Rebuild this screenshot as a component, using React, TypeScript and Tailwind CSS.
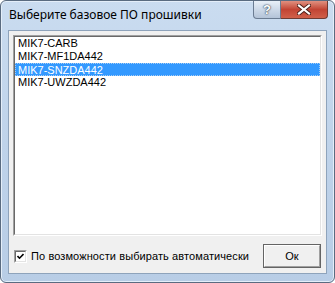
import React from "react";

const items = ["MIK7-CARB", "MIK7-MF1DA442", "MIK7-SNZDA442", "MIK7-UWZDA442"];

export default function App() {
  const selected = 2;

  return (
    <div className="w-[335px] h-[283px] bg-white">
      <div className="w-[335px] h-[283px] flex flex-col rounded-[6px] border border-[#5a6b80] bg-gradient-to-b from-[#cadcf0] via-[#bfd3ea] to-[#b8cde6] shadow-[inset_0_0_0_1px_#e4eef9]">
        {/* Title bar */}
        <div className="h-[29px] flex items-start">
          <span
            className="flex-1 pl-[8px] pt-[6px] text-[12px] leading-[16px] text-black"
            style={{ fontFamily: '"Noto Sans", "Open Sans", sans-serif' }}
          >
            Выберите базовое ПО прошивки
          </span>
          <div className="flex mr-[6px]">
            <div className="w-[28px] h-[18px] flex items-center justify-center rounded-bl-[4px] border border-t-0 border-[#6b7c92] bg-gradient-to-b from-[#e9f0f8] via-[#cdd9e8] to-[#b4c4d8]">
              <span
                className="text-[13px] font-bold leading-none text-white [text-shadow:0_0_1px_#2c3a4c,0_0_2px_#2c3a4c]"
                style={{ fontFamily: '"Liberation Sans", sans-serif' }}
              >
                ?
              </span>
            </div>
            <div className="w-[47px] h-[18px] flex items-center justify-center rounded-br-[4px] border border-t-0 border-l-0 border-[#6f3b33] bg-gradient-to-b from-[#e09080] via-[#c24434] to-[#d0604a]">
              <svg width="14" height="11" viewBox="0 0 14 11">
                <path d="M2 1.5 L12 9.5 M12 1.5 L2 9.5" stroke="#4a1d16" strokeWidth="4" strokeLinecap="square" />
                <path d="M2 1.5 L12 9.5 M12 1.5 L2 9.5" stroke="#ffffff" strokeWidth="2.2" strokeLinecap="square" />
              </svg>
            </div>
          </div>
        </div>

        {/* Client area */}
        <div
          className="ml-[7px] w-[319px] h-[244px] flex flex-col bg-[#f0f0f0] border border-[#8ea3bb] px-[4px] pt-[4px] pb-[5px]"
          style={{ fontFamily: '"Liberation Sans", Arial, sans-serif' }}
        >
          {/* List box */}
          <div className="h-[201px] border border-t-[#a0a0a0] border-l-[#a0a0a0] border-r-white border-b-white">
            <div className="h-full bg-white border border-t-[#696969] border-l-[#696969] border-r-[#e3e3e3] border-b-[#e3e3e3]">
              {items.map((item, i) => (
                <div
                  key={item}
                  className={
                    i === selected
                      ? "h-[13px] pl-[2px] text-[11px] leading-[12px] bg-[#3399ff] text-white border border-dotted border-[#a8cdf3]"
                      : "h-[13px] pl-[3px] text-[11px] leading-[13px] text-black"
                  }
                >
                  {item}
                </div>
              ))}
            </div>
          </div>

          {/* Bottom row */}
          <div className="mt-[8px] h-[24px] flex items-center">
            <div className="ml-[1px] w-[13px] h-[13px] border border-t-[#a0a0a0] border-l-[#a0a0a0] border-r-white border-b-white">
              <div className="w-full h-full bg-white border border-t-[#696969] border-l-[#696969] border-r-[#e3e3e3] border-b-[#e3e3e3] flex items-center justify-center">
                <svg width="7" height="7" viewBox="0 0 7 7">
                  <path d="M0.5 3 L2.5 5.2 L6.5 1" stroke="#000" strokeWidth="1.6" fill="none" />
                </svg>
              </div>
            </div>
            <span className="ml-[4px] flex-1 text-[11px] leading-[13px] text-black tracking-[0.1px]">
              По возможности выбирать автоматически
            </span>
            <div className="w-[58px] h-[24px] border border-[#646464] mr-[1px]">
              <div className="w-full h-full border border-t-white border-l-white border-r-[#a0a0a0] border-b-[#a0a0a0] bg-[#f0f0f0] flex items-center justify-center text-[11px] text-black">
                Ок
              </div>
            </div>
          </div>
        </div>
      </div>
    </div>
  );
}
